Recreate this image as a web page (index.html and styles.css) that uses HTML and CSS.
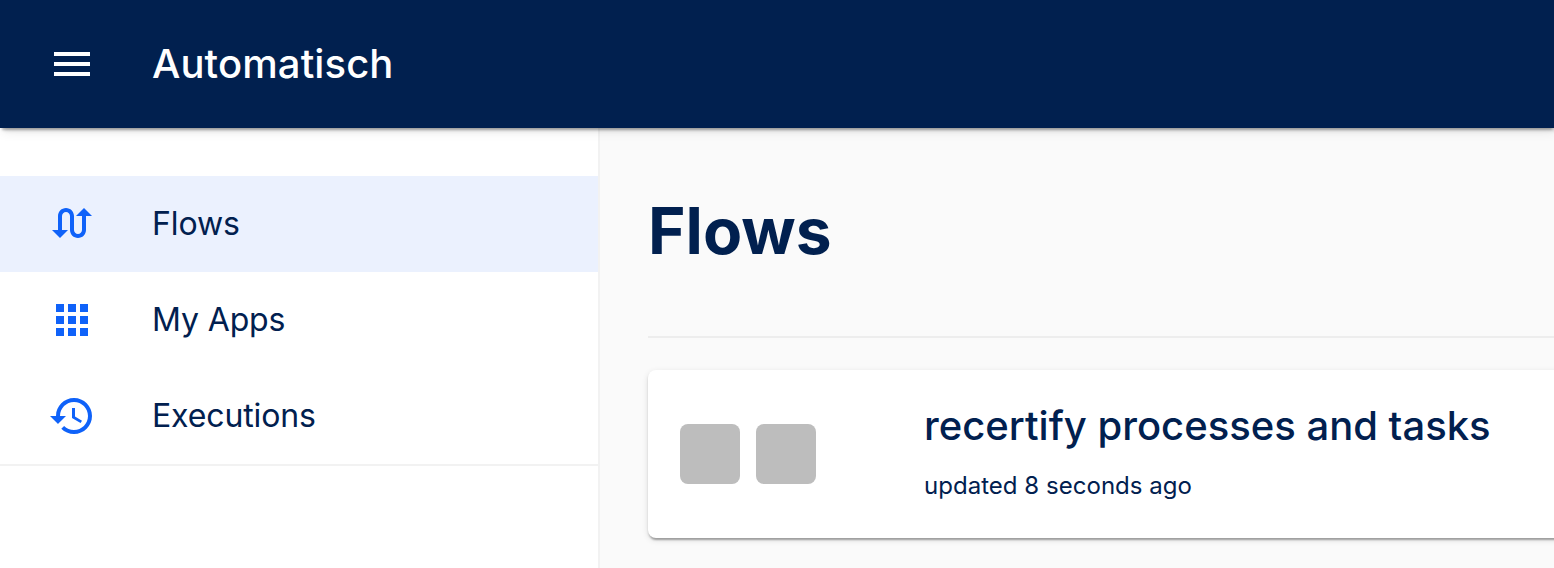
FILE: index.html
```html
<!DOCTYPE html>
<html lang="en">
<head>
<meta charset="utf-8">
<title>Automatisch</title>
<link rel="stylesheet" href="styles.css">
</head>
<body>
<header class="appbar">
  <svg class="icon" viewBox="0 0 24 24"><path d="M3 18h18v-2H3v2zm0-5h18v-2H3v2zm0-7v2h18V6H3z"/></svg>
  <span class="brand">Automatisch</span>
</header>
<div class="layout">
  <nav class="drawer">
    <ul class="menu">
      <li class="item selected">
        <svg class="icon" viewBox="0 0 24 24"><path d="m18 4-4 4h3v7c0 1.100-.9 2-2 2s-2-.9-2-2V8c0-2.210-1.790-4-4-4S5 5.790 5 8v7H2l4 4 4-4H7V8c0-1.100.9-2 2-2s2 .9 2 2v7c0 2.210 1.790 4 4 4s4-1.790 4-4V8h3l-4-4z"/></svg>
        <span>Flows</span>
      </li>
      <li class="item">
        <svg class="icon" viewBox="0 0 24 24"><path d="M4 8h4V4H4v4zm6 12h4v-4h-4v4zm-6 0h4v-4H4v4zm0-6h4v-4H4v4zm6 0h4v-4h-4v4zm6-10v4h4V4h-4zm-6 4h4V4h-4v4zm6 6h4v-4h-4v4zm0 6h4v-4h-4v4z"/></svg>
        <span>My Apps</span>
      </li>
      <li class="item">
        <svg class="icon" viewBox="0 0 24 24"><path d="M13 3c-4.970 0-9 4.030-9 9H1l3.890 3.890.07.14L9 12H6c0-3.870 3.130-7 7-7s7 3.130 7 7-3.130 7-7 7c-1.930 0-3.680-.79-4.940-2.060l-1.420 1.420C8.270 19.990 10.510 21 13 21c4.970 0 9-4.030 9-9s-4.030-9-9-9zm-1 5v5l4.280 2.540.72-1.210-3.500-2.080V8H12z"/></svg>
        <span>Executions</span>
      </li>
    </ul>
  </nav>
  <main class="content">
    <h1 class="title">Flows</h1>
    <hr class="divider">
    <article class="card">
      <div class="apps"><span class="app"></span><span class="app"></span></div>
      <div class="details">
        <h2 class="name">recertify processes and tasks</h2>
        <p class="updated">updated 8 seconds ago</p>
      </div>
    </article>
  </main>
</div>
</body>
</html>
```
FILE: styles.css
```css
* { box-sizing: border-box; }
body {
  margin: 0;
  height: 568px;
  overflow: hidden;
  display: flex;
  flex-direction: column;
  background: #fafafa;
  color: #01204f;
  font-family: Inter, "Liberation Sans", sans-serif;
}
.icon { width: 48px; height: 48px; flex: none; fill: currentColor; }
.appbar {
  position: relative;
  z-index: 1;
  flex: none;
  height: 128px;
  padding: 0 48px;
  display: flex;
  align-items: center;
  gap: 56px;
  background: #01204f;
  color: #fff;
  box-shadow: 0 4px 2px -2px rgba(0,0,0,.2), 4px 2px 4px rgba(0,0,0,.2), 2px 2px 12px rgba(0,0,0,.12);
}
.brand { font-size: 40px; font-weight: 500; line-height: 64px; letter-spacing: .1px; }
.layout { flex: 1; min-height: 0; display: flex; }
.drawer {
  flex: none;
  width: 600px;
  padding-top: 48px;
  background: #fff;
  border-right: 2px solid #f2f2f2;
}
.menu { margin: 0; padding: 0; list-style: none; border-bottom: 2px solid #f2f2f2; }
.item {
  height: 96px;
  padding: 0 48px;
  display: flex;
  align-items: center;
  gap: 56px;
  font-size: 32px;
  line-height: 48px;
  letter-spacing: -.12px;
}
.item .icon { color: #0f62f9; }
.selected { background: #ebf1fe; }
.content { flex: none; width: 1000px; padding: 63px 0 0 48px; }
.title { margin: 0; font-size: 64px; font-weight: 700; line-height: 80px; }
.divider { margin: 65px 0 32px; border: 0; height: 2px; background: #ededed; }
.card {
  height: 168px;
  padding: 0 32px;
  display: flex;
  align-items: center;
  border-radius: 8px;
  background: #fff;
  box-shadow: 0 4px 2px -2px rgba(0,0,0,.2), 0 2px 2px rgba(0,0,0,.14), 0 2px 6px rgba(0,0,0,.12);
}
.apps { width: 244px; display: flex; gap: 16px; }
.app { width: 60px; height: 60px; border-radius: 8px; background: #bdbdbd; }
.details { padding-bottom: 8px; }
.name { margin: 0; font-size: 40px; font-weight: 500; line-height: 64px; white-space: nowrap; }
.updated { margin: 8px 0 0; font-size: 24px; line-height: 40px; letter-spacing: .03px; }
```
